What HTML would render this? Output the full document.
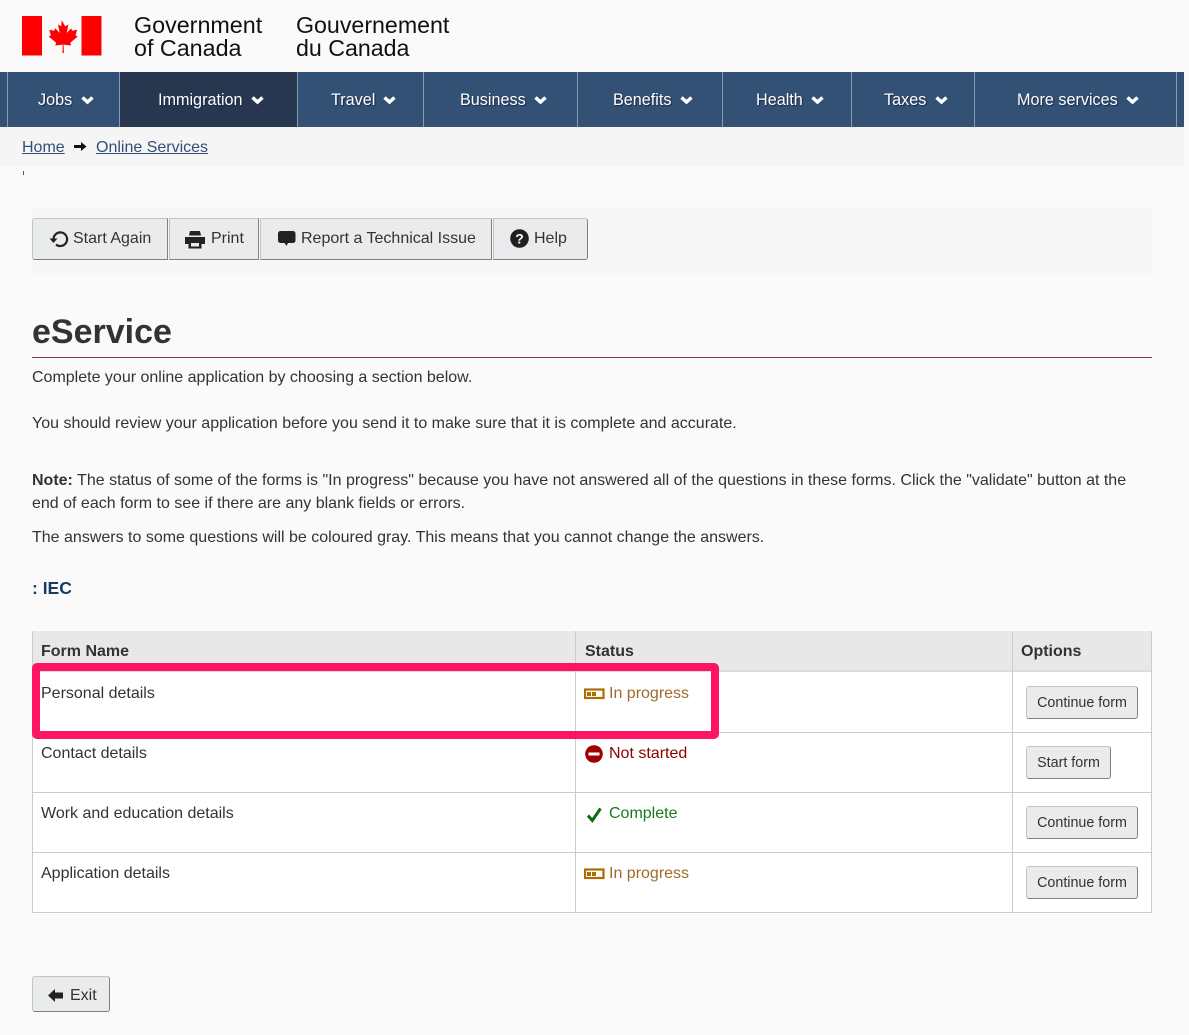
<!DOCTYPE html>
<html lang="en"><head><meta charset="utf-8"><title>eService</title>
<style>
html,body{margin:0;padding:0;width:1189px;height:1035px;overflow:hidden;background:#fafafa}
body{font-family:"Liberation Sans",sans-serif;font-size:16px;color:#333;position:relative}
.a{position:absolute;white-space:nowrap}
.nav{position:absolute;left:0;top:72px;width:1184px;height:55px;background:#335075}
.sep{position:absolute;top:72px;width:1px;height:55px;background:#8a9bb0}
.ni{position:absolute;top:90px;color:#fff;line-height:20px;font-size:16.2px;text-shadow:1px 1px 1px #1a2a40}
.chev{position:absolute;top:94px}
.tb{position:absolute;top:218px;height:40px;background:#eaebed;border:1px solid #c4c4c4;border-bottom:1px solid #808080;border-right-color:#808080}
.tt{position:absolute;top:229px;line-height:20px;color:#333}
.btn{position:absolute;height:31px;line-height:32px;background:#eaebed;border:1px solid #c4c4c4;border-bottom:1px solid #808080;border-right-color:#808080;border-radius:3px;font-size:14.3px;text-align:center;color:#333}
.line{position:absolute;background:#ccc}
a{color:#335075}
</style></head><body>
<svg class="a" style="left:22px;top:16px" width="80" height="40" viewBox="0 0 80 40">
<rect x="0" y="0" width="20" height="39.5" fill="#f00"/><rect x="59.5" y="0" width="20" height="39.5" fill="#f00"/>
<path d="M39.7 4l3.4 6.2 3.3-1.700-1.700 8.500 4.400-4.700 1 2.400 5-1-1.600 5.700 2.200 1.100-7.400 6.200.8 2.800-7.500-.9.3 8.400h-1.400l.3-8.400-7.500.9.8-2.800-7.400-6.200 2.200-1.100-1.600-5.700 5 1 1-2.400 4.400 4.700-1.700-8.500 3.300 1.700z" fill="#f00"/>
</svg>
<div class="a" style="left:134px;top:14px;font-size:23.3px;line-height:23px;color:#111;">Government<br>of Canada</div>
<div class="a" style="left:296px;top:14px;font-size:23.2px;line-height:23px;color:#111;">Gouvernement<br>du Canada</div>

<div class="nav"></div>
<div class="a" style="left:120px;top:72px;width:177px;height:55px;background:#26374f"></div>
<div class="sep" style="left:7px"></div><div class="sep" style="left:119px"></div><div class="sep" style="left:297px"></div><div class="sep" style="left:423px"></div><div class="sep" style="left:577px"></div><div class="sep" style="left:722px"></div><div class="sep" style="left:851px"></div><div class="sep" style="left:974px"></div><div class="sep" style="left:1176px"></div>

<div class="ni" style="left:38px">Jobs</div>
<div class="ni" style="left:158px">Immigration</div>
<div class="ni" style="left:331px">Travel</div>
<div class="ni" style="left:460px">Business</div>
<div class="ni" style="left:613px">Benefits</div>
<div class="ni" style="left:756px">Health</div>
<div class="ni" style="left:884px">Taxes</div>
<div class="ni" style="left:1017px">More services</div>
<svg width="0" height="0" style="position:absolute"><defs><path id="c" d="M1.500 3.500 6.500 8 11.500 3.500" fill="none" stroke="#fff" stroke-width="3.500"/></defs></svg>
<svg class="chev" style="left:81px" width="13" height="11"><use href="#c"/></svg>
<svg class="chev" style="left:251px" width="13" height="11"><use href="#c"/></svg>
<svg class="chev" style="left:383px" width="13" height="11"><use href="#c"/></svg>
<svg class="chev" style="left:534px" width="13" height="11"><use href="#c"/></svg>
<svg class="chev" style="left:680px" width="13" height="11"><use href="#c"/></svg>
<svg class="chev" style="left:811px" width="13" height="11"><use href="#c"/></svg>
<svg class="chev" style="left:935px" width="13" height="11"><use href="#c"/></svg>
<svg class="chev" style="left:1126px" width="13" height="11"><use href="#c"/></svg>

<div class="a" style="left:0;top:127px;width:1184px;height:39px;background:#f5f5f5"></div>
<a class="a" style="left:22px;top:138px;line-height:20px;text-decoration:underline">Home</a>
<svg class="a" style="left:74px;top:141px" width="13" height="11"><path d="M0 4h7V1l5.500 4.500L7 10V7H0z" fill="#111"/></svg>
<a class="a" style="left:96px;top:138px;line-height:20px;text-decoration:underline">Online Services</a>
<div class="a" style="left:23px;top:171px;width:1px;height:4px;background:#555"></div>

<div class="a" style="left:32px;top:208px;width:1120px;height:66px;background:#f7f7f7"></div>
<div class="tb" style="left:32px;width:134px;border-radius:3px 0 0 3px"></div>
<div class="tb" style="left:169px;width:88px"></div>
<div class="tb" style="left:260px;width:230px"></div>
<div class="tb" style="left:493px;width:93px;border-radius:0 3px 3px 0"></div>
<svg class="a" style="left:49px;top:230px" width="20" height="18" viewBox="0 0 20 18"><path d="M4.500 9.500A6.800 6.800 0 1 1 7 14.500" fill="none" stroke="#222" stroke-width="2.200"/><path d="M0.500 8.500h8l-4 4.500z" fill="#222"/></svg>
<div class="tt" style="left:73px">Start Again</div>
<svg class="a" style="left:185px;top:231px" width="20" height="18" viewBox="0 0 20 18"><path d="M5 0h10l1 4.500H4z" fill="#222"/><path d="M0 6h20v7h-3.500V10h-13v3H0z" fill="#222"/><path d="M3.500 10h13v7.500h-13zM6 12v3.500h8V12z" fill="#222"/></svg>
<div class="tt" style="left:211px">Print</div>
<svg class="a" style="left:278px;top:231px" width="18" height="17" viewBox="0 0 18 17"><path d="M2.500 0h12.500a2.500 2.500 0 0 1 2.500 2.500v7a2.500 2.500 0 0 1-2.500 2.500h-5l-1.500 3-2-3h-4A2.500 2.500 0 0 1 0 9.500v-7A2.500 2.500 0 0 1 2.500 0z" fill="#222"/></svg>
<div class="tt" style="left:301px">Report a Technical Issue</div>
<svg class="a" style="left:510px;top:229px" width="19" height="19"><circle cx="9.500" cy="9.500" r="9.300" fill="#1f1f1f"/><text x="9.500" y="14.500" font-family="Liberation Sans" font-weight="700" font-size="14" fill="#fff" text-anchor="middle">?</text></svg>
<div class="tt" style="left:534px">Help</div>

<div class="a" style="left:32px;top:312px;font-size:34px;line-height:40px;font-weight:700;color:#333">eService</div>
<div class="a" style="left:32px;top:357px;width:1120px;height:1px;background:#843c40"></div>
<div class="a" style="left:32px;top:368px;line-height:20px">Complete your online application by choosing a section below.</div>
<div class="a" style="left:32px;top:414px;line-height:20px">You should review your application before you send it to make sure that it is complete and accurate.</div>
<div class="a" style="left:32px;top:471px;line-height:20px"><b>Note:</b> The status of some of the forms is "In progress" because you have not answered all of the questions in these forms. Click the "validate" button at the</div>
<div class="a" style="left:32px;top:494px;line-height:20px">end of each form to see if there are any blank fields or errors.</div>
<div class="a" style="left:32px;top:528px;line-height:20px">The answers to some questions will be coloured gray. This means that you cannot change the answers.</div>
<div class="a" style="left:32px;top:577px;line-height:22px;font-size:17.5px;font-weight:700;color:#163c5f">: IEC</div>

<div class="a" style="left:32px;top:631px;width:1120px;height:282px;background:#fff"></div>
<div class="a" style="left:33px;top:631px;width:1118px;height:39px;background:#e8e8e8"></div>
<div class="a" style="left:33px;top:670px;width:1118px;height:2px;background:#dcdcdc"></div>
<div class="line" style="left:32px;top:631px;width:1px;height:282px"></div>
<div class="line" style="left:575px;top:631px;width:1px;height:282px"></div>
<div class="line" style="left:1012px;top:631px;width:1px;height:282px"></div>
<div class="line" style="left:1151px;top:631px;width:1px;height:282px"></div>
<div class="line" style="left:32px;top:732px;width:1120px;height:1px"></div>
<div class="line" style="left:32px;top:792px;width:1120px;height:1px"></div>
<div class="line" style="left:32px;top:852px;width:1120px;height:1px"></div>
<div class="line" style="left:32px;top:912px;width:1120px;height:1px"></div>

<div class="a" style="left:41px;top:642px;line-height:20px;font-weight:700">Form Name</div>
<div class="a" style="left:585px;top:642px;line-height:20px;font-weight:700">Status</div>
<div class="a" style="left:1021px;top:642px;line-height:20px;font-weight:700">Options</div>

<div class="a" style="left:41px;top:684px;line-height:20px">Personal details</div>
<div class="a" style="left:41px;top:744px;line-height:20px">Contact details</div>
<div class="a" style="left:41px;top:804px;line-height:20px">Work and education details</div>
<div class="a" style="left:41px;top:864px;line-height:20px">Application details</div>

<svg class="a" style="left:584px;top:688px" width="21" height="12"><rect x="1" y="1.500" width="18.500" height="8.500" fill="#fff" stroke="#b06c00" stroke-width="2.200"/><rect x="3" y="4" width="4" height="4" fill="#b06c00"/><rect x="8" y="4" width="4" height="4" fill="#b06c00"/></svg>
<div class="a" style="left:609px;top:684px;line-height:20px;color:#a0692a">In progress</div>
<svg class="a" style="left:585px;top:745px" width="19" height="18"><circle cx="9" cy="9" r="8.800" fill="#a00000"/><rect x="3.500" y="7.500" width="11" height="3" fill="#fff"/></svg>
<div class="a" style="left:609px;top:744px;line-height:20px;color:#8b0000">Not started</div>
<svg class="a" style="left:586px;top:806px" width="17" height="17"><path d="M2 9.500 6.300 14.500 14.500 2.500" fill="none" stroke="#0f6b0f" stroke-width="3"/></svg>
<div class="a" style="left:609px;top:804px;line-height:20px;color:#1a7a1a">Complete</div>
<svg class="a" style="left:584px;top:868px" width="21" height="12"><rect x="1" y="1.500" width="18.500" height="8.500" fill="#fff" stroke="#b06c00" stroke-width="2.200"/><rect x="3" y="4" width="4" height="4" fill="#b06c00"/><rect x="8" y="4" width="4" height="4" fill="#b06c00"/></svg>
<div class="a" style="left:609px;top:864px;line-height:20px;color:#a0692a">In progress</div>

<div class="btn" style="left:1026px;top:686px;width:110px">Continue form</div>
<div class="btn" style="left:1026px;top:746px;width:83px">Start form</div>
<div class="btn" style="left:1026px;top:806px;width:110px">Continue form</div>
<div class="btn" style="left:1026px;top:866px;width:110px">Continue form</div>

<div class="a" style="left:32px;top:663px;width:671px;height:60px;border:8px solid #ff1464;border-radius:5px"></div>

<div class="a" style="left:32px;top:976px;width:76px;height:34px;background:#eaebed;border:1px solid #c4c4c4;border-bottom:1px solid #808080;border-right-color:#808080;border-radius:3px"></div>
<svg class="a" style="left:48px;top:989px" width="15" height="13"><path d="M15 3.500H7V0L0 6.500 7 13V9.500h8z" fill="#222"/></svg>
<div class="a" style="left:70px;top:986px;line-height:20px">Exit</div>
</body></html>
